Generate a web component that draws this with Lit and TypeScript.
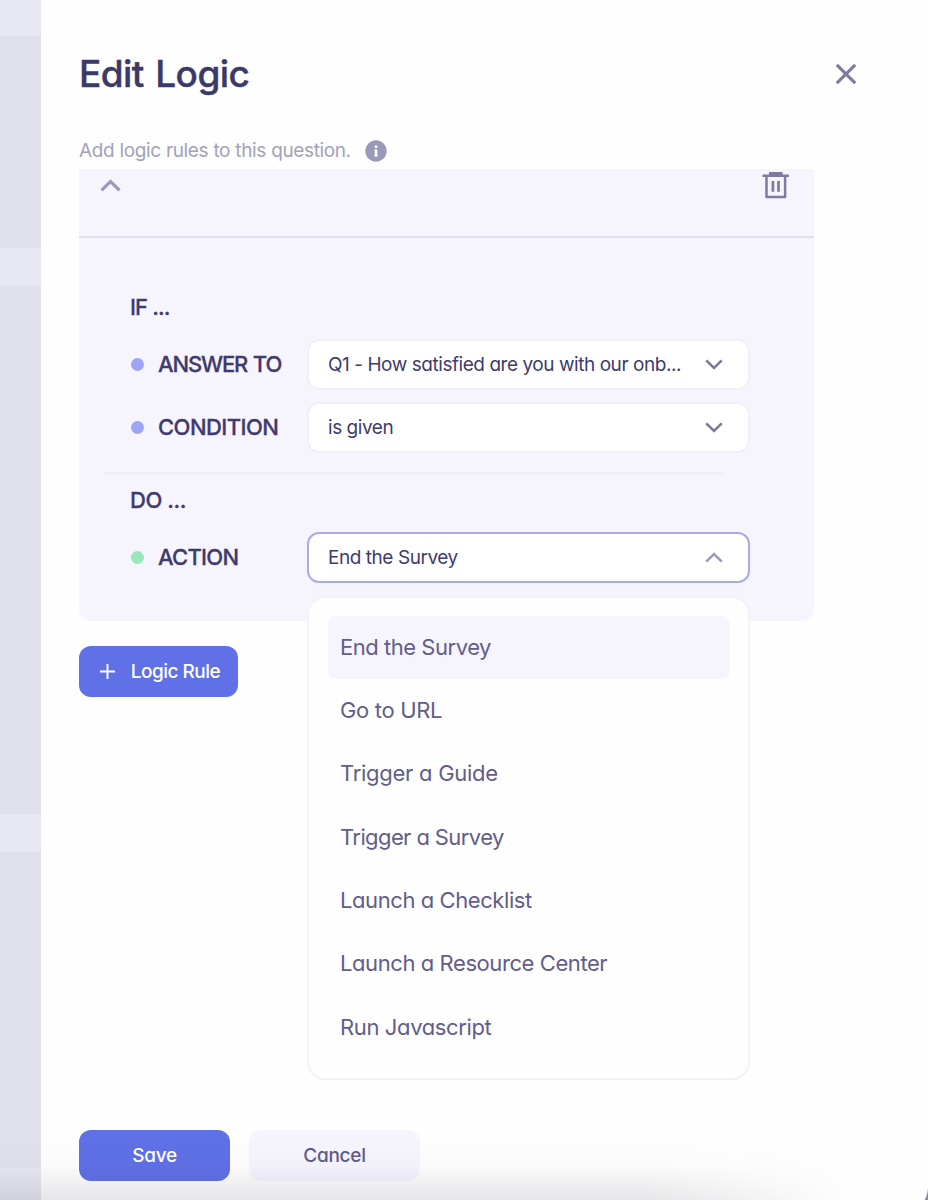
import { LitElement, html, css, svg } from "lit";
import { customElement, state } from "lit/decorators.js";
import { classMap } from "lit/directives/class-map.js";
import { styleMap } from "lit/directives/style-map.js";

interface Option {
  label: string;
  tracking: number;
}

const ACTIONS: Option[] = [
  { label: "End the Survey", tracking: -0.47 },
  { label: "Go to URL", tracking: -0.33 },
  { label: "Trigger a Guide", tracking: -0.27 },
  { label: "Trigger a Survey", tracking: -0.6 },
  { label: "Launch a Checklist", tracking: -0.42 },
  { label: "Launch a Resource Center", tracking: -0.42 },
  { label: "Run Javascript", tracking: -0.37 },
];

const chevron = (up: boolean, cls: string) => html`
  <svg class=${cls} viewBox="0 0 20 12" fill="none">
    ${up
      ? svg`<path d="M1.4 10.6 L10 2.2 L18.6 10.6" stroke="currentColor" stroke-width="3"/>`
      : svg`<path d="M1.4 1.4 L10 9.8 L18.6 1.4" stroke="currentColor" stroke-width="3"/>`}
  </svg>
`;

@customElement("app-root")
export class AppRoot extends LitElement {
  @state() private open = true;
  @state() private selected = ACTIONS[0].label;

  static styles = css`
    :host {
      display: flex;
      position: relative;
      width: 928px;
      height: 1200px;
      overflow: hidden;
      background: #fefefe;
      font-family: Inter, "Liberation Sans", sans-serif;
      font-feature-settings: "cv11", "ss03";
      color: #3f3b6c;
    }
    * {
      box-sizing: border-box;
    }
    .backdrop {
      width: 41px;
      flex: none;
      display: flex;
      flex-direction: column;
      background: #e0e1ea;
    }
    .band {
      flex: none;
      height: 38px;
      background: #e7e8f2;
    }
    .band.first {
      height: 36px;
      margin-bottom: 212px;
    }
    .band.second {
      margin-bottom: 528px;
    }
    .band.third {
      margin-bottom: 316px;
    }
    .panel {
      flex: 1;
      padding: 0 0 0 38px;
      display: flex;
      flex-direction: column;
      align-items: flex-start;
    }
    .top {
      display: flex;
      align-items: center;
      justify-content: space-between;
      width: 778px;
      height: 48px;
      margin-top: 50px;
    }
    h1 {
      margin: 0;
      font-size: 37px;
      line-height: 48px;
      font-weight: 500;
      letter-spacing: -0.55px;
      word-spacing: 2px;
      color: #3b3968;
      -webkit-text-stroke: 0.4px #3b3968;
    }
    .close {
      width: 22px;
      height: 22px;
      color: #7d7b9f;
    }
    .hint {
      display: flex;
      align-items: center;
      height: 24px;
      margin-top: 41px;
      font-size: 19px;
      line-height: 24px;
      letter-spacing: -0.38px;
      word-spacing: 0.3px;
      color: #a2a2bb;
    }
    .hint svg {
      width: 22px;
      height: 22px;
      margin: 0 0 1px 14px;
    }
    .card {
      width: 735px;
      height: 452px;
      margin-top: 6px;
      border-radius: 0 0 12px 12px;
      background: #f6f5fe;
    }
    .card-head {
      display: flex;
      justify-content: space-between;
      height: 69px;
      padding: 2px 25px 0 21px;
      border-bottom: 2px solid #e0dfee;
    }
    .card-head .fold {
      width: 21px;
      height: 13px;
      margin-top: 8px;
      color: #9d99b9;
    }
    .trash {
      width: 27px;
      height: 28px;
      color: #7d7b9f;
    }
    .card-body {
      padding: 56px 0 0 51px;
    }
    .clause {
      height: 26px;
      font-size: 22px;
      line-height: 26px;
      font-weight: 500;
      letter-spacing: -0.9px;
      -webkit-text-stroke: 0.3px currentColor;
    }
    .clause.do {
      letter-spacing: -0.45px;
    }
    .row {
      display: flex;
      align-items: center;
      height: 50px;
      margin-top: 13px;
    }
    .clause + .row {
      margin-top: 19px;
    }
    .dot {
      width: 13px;
      height: 13px;
      margin: 0 14px 0 1px;
      border-radius: 50%;
      background: #9ea5f5;
    }
    .dot.green {
      background: #98e7bd;
    }
    .name {
      width: 149px;
      font-size: 22px;
      line-height: 50px;
      font-weight: 500;
      letter-spacing: -0.75px;
      white-space: nowrap;
      -webkit-text-stroke: 0.3px currentColor;
    }
    .name.answer {
      letter-spacing: -1.15px;
      word-spacing: 1px;
    }
    .name.cond {
      letter-spacing: -0.55px;
    }
    .select {
      position: relative;
      width: 443px;
      height: 51px;
      padding: 0 25px 0 19px;
      display: flex;
      align-items: center;
      justify-content: space-between;
      border: 2px solid #f1f0f9;
      border-radius: 12px;
      background: #fff;
      font-size: 19px;
      font-weight: 400;
      letter-spacing: -0.45px;
      white-space: nowrap;
    }
    .select.open {
      border-color: #aaaaea;
    }
    .select .arrow {
      width: 18px;
      height: 11px;
      color: #7d7b9b;
    }
    .select.open .arrow {
      color: #9c9bb9;
    }
    .rule {
      width: 621px;
      height: 3px;
      margin: 20px 0 12px -26px;
      background: #efeef9;
    }
    .menu {
      position: absolute;
      z-index: 2;
      top: 62px;
      left: -2px;
      width: 443px;
      height: 484px;
      padding: 18px 18px 18px 19px;
      border: 2px solid #f3f2f9;
      border-radius: 18px;
      background: #fefefe;
    }
    .option {
      height: 63.35px;
      padding-left: 12px;
      border-radius: 8px;
      font-size: 22px;
      line-height: 63px;
      font-weight: 400;
      color: #625d8a;
    }
    .option.active {
      background: #f6f5fe;
    }
    .btn {
      display: flex;
      align-items: center;
      justify-content: center;
      height: 51px;
      border-radius: 12px;
      background: #6070e6;
      color: #fff;
      font-size: 19px;
      font-weight: 500;
      letter-spacing: -0.25px;
    }
    .add {
      width: 159px;
      margin-top: 25px;
      padding-left: 2px;
      gap: 15px;
      letter-spacing: -0.5px;
    }
    .add svg {
      width: 17px;
      height: 17px;
    }
    .actions {
      display: flex;
      gap: 19px;
      margin-top: 433px;
    }
    .save {
      width: 151px;
    }
    .cancel {
      width: 171px;
      background: #f6f5fe;
      color: #5f5a87;
    }
    .shade {
      position: absolute;
      left: 0;
      bottom: 0;
      width: 850px;
      height: 62px;
      pointer-events: none;
      background: linear-gradient(to bottom, transparent, rgba(60, 50, 70, 0.02) 45%, rgba(60, 50, 70, 0.12));
      -webkit-mask-image: linear-gradient(to right, #000 76%, transparent);
      mask-image: linear-gradient(to right, #000 76%, transparent);
    }
    .corner {
      position: absolute;
      right: 0;
      bottom: 0;
      width: 4px;
      height: 12px;
    }
  `;

  private choose(label: string) {
    this.selected = label;
    this.open = false;
  }

  private renderMenu() {
    return html`<div class="menu" role="listbox">
      ${ACTIONS.map(
        (o) => html`<div
          class=${classMap({ option: true, active: o.label === this.selected })}
          style=${styleMap({ letterSpacing: `${o.tracking}px` })}
          role="option"
          @click=${(e: Event) => {
            e.stopPropagation();
            this.choose(o.label);
          }}
        >${o.label}</div>`
      )}
    </div>`;
  }

  render() {
    return html`
      <div class="backdrop">
        <div class="band first"></div>
        <div class="band second"></div>
        <div class="band third"></div>
        <div class="band"></div>
      </div>
      <main class="panel">
        <div class="top">
          <h1>Edit Logic</h1>
          <svg class="close" viewBox="0 0 22 22" fill="none" stroke="currentColor" stroke-width="3.1">
            <path d="M1.8 1.8 L20.2 20.2 M20.2 1.8 L1.8 20.2" />
          </svg>
        </div>
        <div class="hint">
          <span>Add logic rules to this question.</span>
          <svg viewBox="0 0 22 22">
            <circle cx="11" cy="11" r="10.7" fill="#9a99b8" />
            <rect x="9.7" y="5.4" width="2.7" height="2.6" rx="0.5" fill="#fff" />
            <path d="M9.2 9.4 H12.3 V15.2 H12.9 V16.4 H9.2 V15.2 H9.8 V10.6 H9.2 Z" fill="#fff" />
          </svg>
        </div>
        <section class="card">
          <div class="card-head">
            ${chevron(true, "fold")}
            <svg class="trash" viewBox="0 0 27 28" fill="none">
              <rect x="7" y="1" width="13.6" height="3.5" rx="0.6" fill="currentColor" />
              <rect x="0.5" y="3.6" width="26.4" height="2.4" rx="0.6" fill="currentColor" />
              <path d="M4.5 5 V25.9 H23.1 V5" stroke="currentColor" stroke-width="2.5" stroke-linejoin="round" />
              <path d="M10.9 10 V20.8 M16.5 10 V20.8" stroke="currentColor" stroke-width="2.7" />
            </svg>
          </div>
          <div class="card-body">
            <div class="clause">IF ...</div>
            <div class="row">
              <span class="dot"></span>
              <span class="name answer">ANSWER TO</span>
              <div class="select"><span>Q1 - How satisfied are you with our onb...</span>${chevron(false, "arrow")}</div>
            </div>
            <div class="row">
              <span class="dot"></span>
              <span class="name cond">CONDITION</span>
              <div class="select"><span>is given</span>${chevron(false, "arrow")}</div>
            </div>
            <div class="rule"></div>
            <div class="clause do">DO ...</div>
            <div class="row">
              <span class="dot green"></span>
              <span class="name">ACTION</span>
              <div class=${classMap({ select: true, open: this.open })} @click=${() => (this.open = !this.open)}>
                <span>${this.selected}</span>${chevron(this.open, "arrow")}
                ${this.open ? this.renderMenu() : null}
              </div>
            </div>
          </div>
        </section>
        <div class="btn add">
          <svg viewBox="0 0 17 17" stroke="currentColor" stroke-width="1.9"><path d="M8.5 1 V16 M1 8.5 H16" /></svg>
          <span>Logic Rule</span>
        </div>
        <div class="actions">
          <div class="btn save">Save</div>
          <div class="btn cancel">Cancel</div>
        </div>
      </main>
      <div class="shade"></div>
      <svg class="corner" viewBox="0 0 4 12"><path d="M4 0 C3.6 5 2.6 9 0.6 12 H4 Z" fill="#7d8ea3" /></svg>
    `;
  }
}
